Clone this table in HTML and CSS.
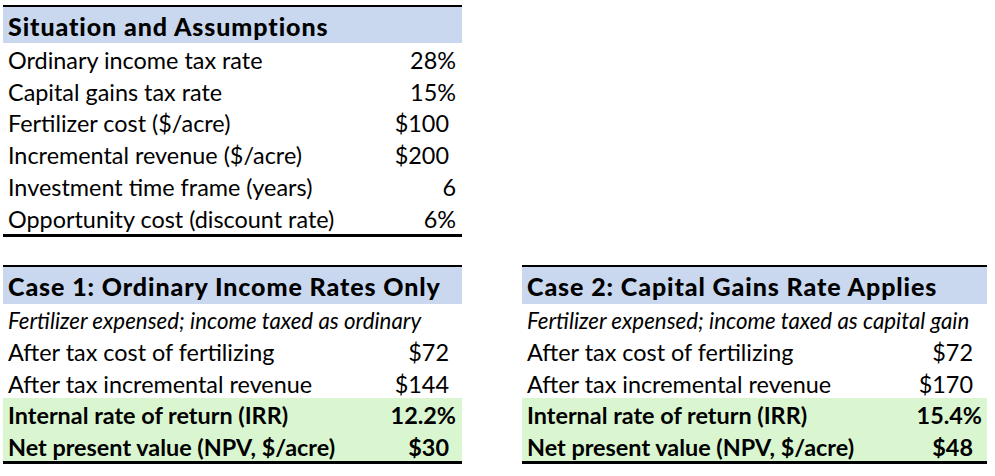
FILE: index.html
```html
<!DOCTYPE html>
<html lang="en">
<head>
<meta charset="utf-8">
<title>Fertilizer tax analysis</title>
<link rel="stylesheet" href="styles.css">
</head>
<body>
<div class="page">
  <section class="sheet assumptions">
    <div class="head">Situation and Assumptions</div>
    <div class="row"><span>Ordinary income tax rate</span><span class="pct">28%</span></div>
    <div class="row"><span>Capital gains tax rate</span><span class="pct">15%</span></div>
    <div class="row"><span>Fertilizer cost ($/acre)</span><span class="cur">$100</span></div>
    <div class="row"><span>Incremental revenue ($/acre)</span><span class="cur">$200</span></div>
    <div class="row"><span>Investment time frame (years)</span><span class="pct">6</span></div>
    <div class="row"><span>Opportunity cost (discount rate)</span><span class="pct">6%</span></div>
  </section>
  <div class="cases">
    <section class="sheet case case1">
      <div class="head">Case 1: Ordinary Income Rates Only</div>
      <div class="row note"><span>Fertilizer expensed; income taxed as ordinary</span></div>
      <div class="row"><span>After tax cost of fertilizing</span><span class="cur">$72</span></div>
      <div class="row"><span>After tax incremental revenue</span><span class="cur">$144</span></div>
      <div class="row result"><span>Internal rate of return (IRR)</span><span class="pct">12.2%</span></div>
      <div class="row result"><span>Net present value (NPV, $/acre)</span><span class="cur">$30</span></div>
    </section>
    <section class="sheet case case2">
      <div class="head">Case 2: Capital Gains Rate Applies</div>
      <div class="row note"><span>Fertilizer expensed; income taxed as capital gain</span></div>
      <div class="row"><span>After tax cost of fertilizing</span><span class="cur">$72</span></div>
      <div class="row"><span>After tax incremental revenue</span><span class="cur">$170</span></div>
      <div class="row result"><span>Internal rate of return (IRR)</span><span class="pct">15.4%</span></div>
      <div class="row result"><span>Net present value (NPV, $/acre)</span><span class="cur">$48</span></div>
    </section>
  </div>
</div>
</body>
</html>
```
FILE: styles.css
```css
html, body {
  margin: 0;
  padding: 0;
  background: #ffffff;
}
body {
  font-family: "Lato", "Open Sans", "Liberation Sans", sans-serif;
  font-size: 23.4px;
  color: #000;
}
.page {
  padding: 5px 0 0 3px;
  display: flex;
  flex-direction: column;
  gap: 28px;
}
.sheet {
  border-top: 2px solid #000;
  border-bottom: 3px solid #000;
  display: flex;
  flex-direction: column;
}
.assumptions {
  width: 459px;
}
.head {
  background: #c9d8ef;
  font-weight: 900;
  font-size: 25px;
  letter-spacing: 0.9px;
  height: 36px;
  display: flex;
  align-items: center;
  padding-left: 5px;
  padding-top: 2px;
  box-sizing: border-box;
}
.row {
  display: flex;
  justify-content: space-between;
  align-items: center;
  padding-left: 5px;
  padding-top: 2px;
  box-sizing: border-box;
}
.assumptions .row {
  height: 31.8px;
}
.pct {
  padding-right: 6px;
}
.cur {
  padding-right: 13px;
}
.cases {
  display: flex;
  gap: 60px;
}
.case1 {
  width: 459px;
}
.case2 {
  width: 465px;
}
.case .head {
  height: 37px;
}
.case .row {
  height: 31.5px;
}
.case2 .pct {
  padding-right: 5px;
}
.case2 .cur {
  padding-right: 14px;
}
.note {
  font-style: italic;
  font-size: 22.3px;
}
.result {
  background: #d9f6d0;
  font-weight: bold;
}
```
